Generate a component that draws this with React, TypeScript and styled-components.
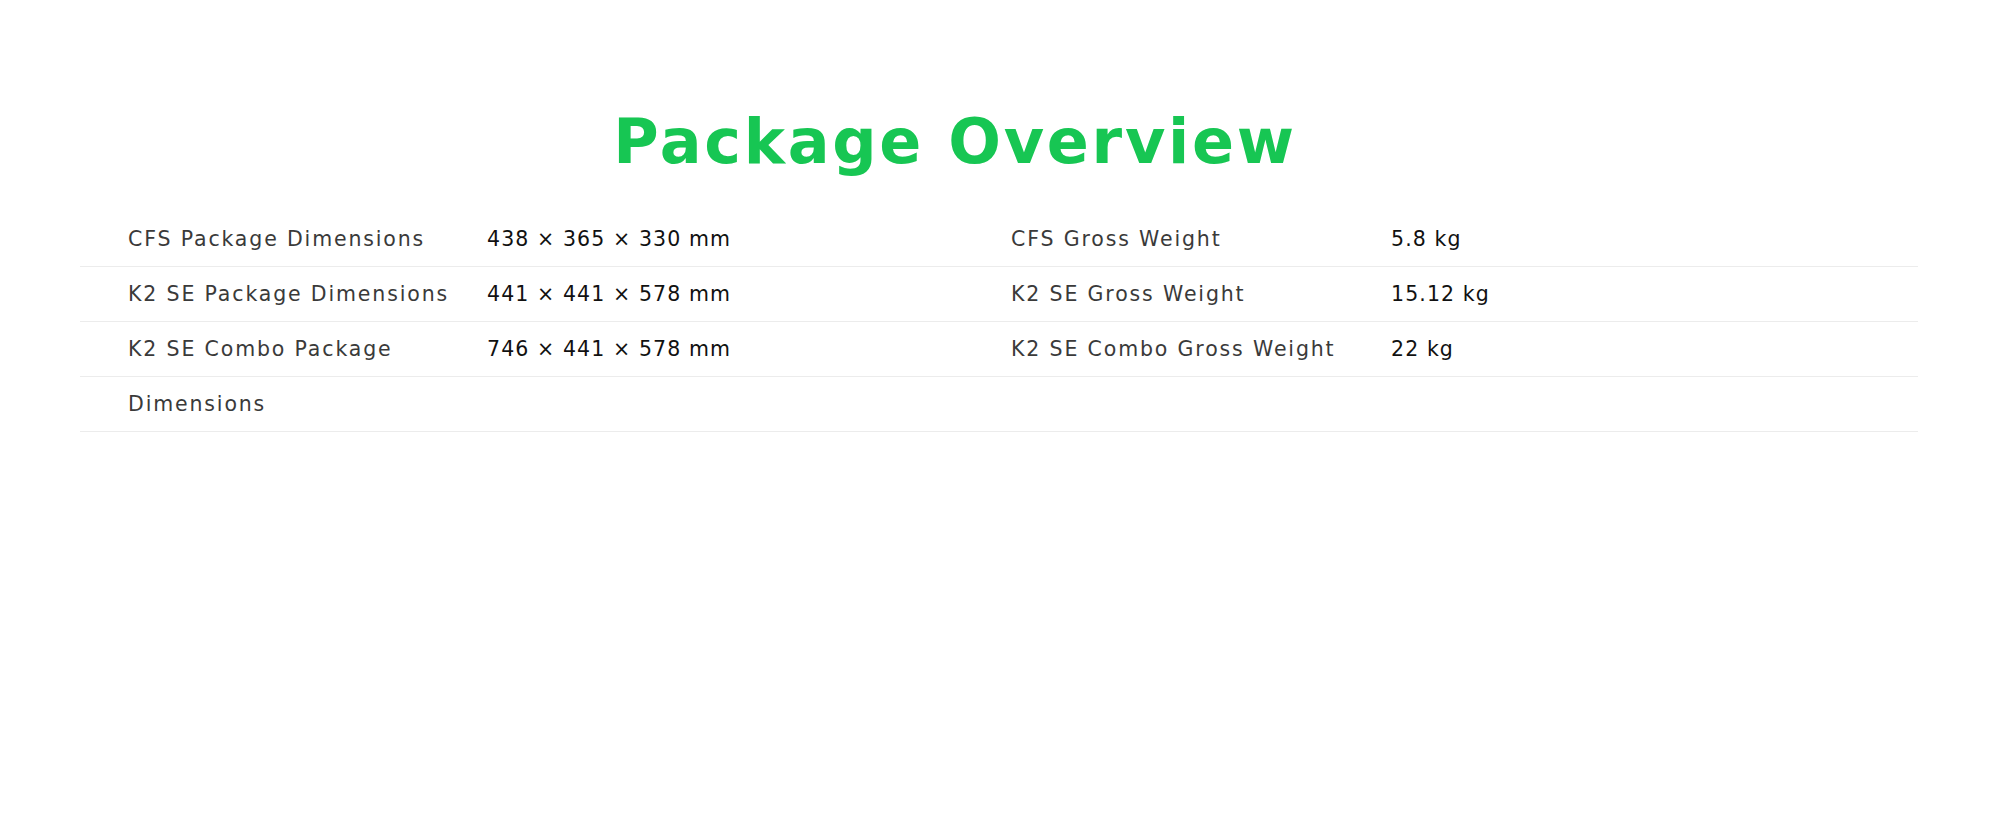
import React from "react";
import styled, { createGlobalStyle } from "styled-components";

const GlobalStyle = createGlobalStyle`
  html, body {
    margin: 0;
    padding: 0;
    background: #ffffff;
  }
  body {
    font-family: "DejaVu Sans", "Liberation Sans", sans-serif;
    -webkit-font-smoothing: antialiased;
  }
`;

const Page = styled.main`
  width: 2000px;
  height: 820px;
  box-sizing: border-box;
  padding: 105px 82px 0 80px;
  display: flex;
  flex-direction: column;
`;

const Header = styled.header`
  display: flex;
  justify-content: center;
  padding-right: 88px;
  margin-bottom: 33px;
`;

const Title = styled.h1`
  margin: 0;
  font-family: "DejaVu Sans", "Liberation Sans", sans-serif;
  font-weight: 700;
  font-size: 62px;
  line-height: 74px;
  letter-spacing: 2.7px;
  color: #17c653;
`;

const SpecTable = styled.section`
  display: flex;
  flex-direction: column;
  background-image: repeating-linear-gradient(
    to bottom,
    transparent 0px,
    transparent 54px,
    #ececec 54px,
    #ececec 55px
  );
`;

const Row = styled.div`
  display: grid;
  grid-template-columns: 359px 524px 380px 1fr;
  padding-left: 48px;
  align-items: start;
`;

const Label = styled.div`
  font-family: "DejaVu Sans", "Liberation Sans", sans-serif;
  font-weight: 400;
  font-size: 20.5px;
  line-height: 55px;
  letter-spacing: 1.85px;
  color: #3a3a3a;
`;

const Value = styled.div`
  font-family: "DejaVu Sans", "Liberation Sans", sans-serif;
  font-weight: 400;
  font-size: 20.5px;
  line-height: 55px;
  letter-spacing: 1.1px;
  color: #111111;
`;

const rows = [
  {
    l1: "CFS Package Dimensions",
    v1: "438 × 365 × 330 mm",
    l2: "CFS Gross Weight",
    v2: "5.8 kg",
  },
  {
    l1: "K2 SE Package Dimensions",
    v1: "441 × 441 × 578 mm",
    l2: "K2 SE Gross Weight",
    v2: "15.12 kg",
  },
  {
    l1: "K2 SE Combo Package Dimensions",
    v1: "746 × 441 × 578 mm",
    l2: "K2 SE Combo Gross Weight",
    v2: "22 kg",
  },
];

export default function App() {
  return (
    <>
      <GlobalStyle />
      <Page>
        <Header>
          <Title>Package Overview</Title>
        </Header>
        <SpecTable>
          {rows.map((r) => (
            <Row key={r.l1}>
              <Label>{r.l1}</Label>
              <Value>{r.v1}</Value>
              <Label>{r.l2}</Label>
              <Value>{r.v2}</Value>
            </Row>
          ))}
        </SpecTable>
      </Page>
    </>
  );
}
